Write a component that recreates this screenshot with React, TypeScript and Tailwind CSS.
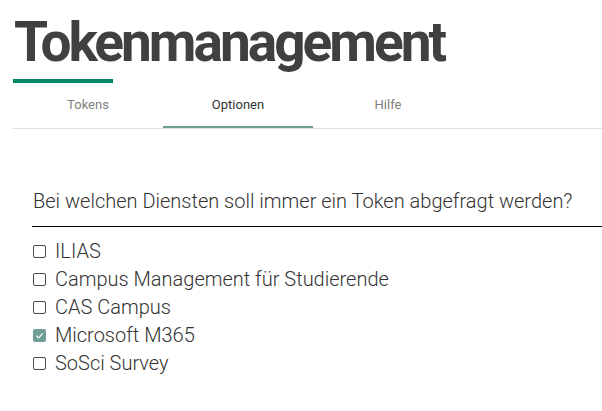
import React from 'react';

const services = [
  { name: 'ILIAS', checked: false },
  { name: 'Campus Management für Studierende', checked: false },
  { name: 'CAS Campus', checked: false },
  { name: 'Microsoft M365', checked: true },
  { name: 'SoSci Survey', checked: false },
];

const tabs = ['Tokens', 'Optionen', 'Hilfe'];

function Box({ checked }: { checked: boolean }) {
  if (checked) {
    return (
      <span className="w-[13px] h-[13px] rounded-[2px] bg-[#6f9f94] flex items-center justify-center shrink-0">
        <svg width="9" height="9" viewBox="0 0 10 10" fill="none">
          <path d="M1.5 5.2 L4 7.6 L8.6 2.6" stroke="white" strokeWidth="1.3" />
        </svg>
      </span>
    );
  }
  return <span className="w-[13px] h-[13px] rounded-[2px] border border-[#4a4a4a] bg-white shrink-0" />;
}

export default function App() {
  return (
    <div className="w-[602px] h-[411px] overflow-hidden bg-white font-['Roboto',sans-serif]">
      {/* Header */}
      <div className="pl-[13px]">
        <h1 className="mt-[15px] pl-px text-[55px] leading-[55px] font-bold tracking-[-3px] text-[#404040]">
          Tokenmanagement
        </h1>
        <div className="mt-[9px] w-[100px] h-[4px] bg-[#00876a]" />
        <div className="flex border-b border-[#e0e0e0]">
          {tabs.map((t) => (
            <div
              key={t}
              className={
                t === 'Optionen'
                  ? 'w-[150px] h-[45px] flex items-center justify-center text-[13px] text-[#333] border-b-2 border-[#6f9f94]'
                  : 'w-[150px] h-[45px] flex items-center justify-center text-[13px] text-[#808080] border-b-2 border-transparent'
              }
            >
              {t}
            </div>
          ))}
        </div>
      </div>

      {/* Optionen */}
      <div className="pl-[32px]">
        <h2 className="mt-[60px] pl-px pb-[13px] text-[20px] leading-[24px] font-light text-[#333] border-b border-black">
          Bei welchen Diensten soll immer ein Token abgefragt werden?
        </h2>
        <ul className="mt-[10px]">
          {services.map((s) => (
            <li key={s.name} className="h-[28px] flex items-center gap-[9px] pl-px text-[20px] font-light text-[#333]">
              <Box checked={s.checked} />
              <span>{s.name}</span>
            </li>
          ))}
        </ul>
      </div>
    </div>
  );
}
